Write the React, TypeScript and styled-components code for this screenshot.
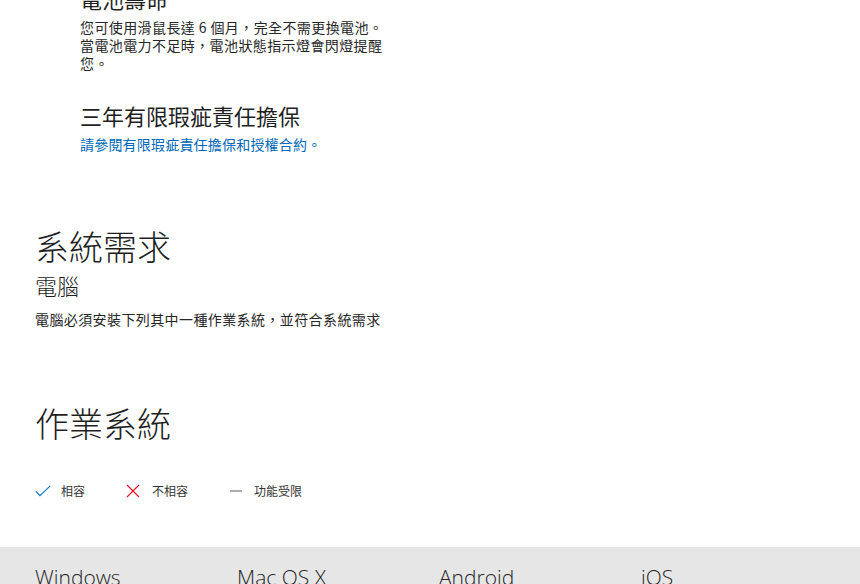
import styled, { createGlobalStyle } from 'styled-components'

const GlobalStyle = createGlobalStyle`
  html, body {
    margin: 0;
    padding: 0;
    background: #fff;
    overflow: hidden;
  }
  body {
    font-family: "Noto Sans CJK TC", "Noto Sans", sans-serif;
    color: #262626;
  }
`

const Page = styled.div`
  width: 860px;
  height: 584px;
  overflow: hidden;
`

const Scroller = styled.div`
  margin-top: -16px;
`

const Content = styled.div`
  padding: 0 35px;
`

const FeatureList = styled.div`
  padding-left: 45px;
  width: 310px;
`

const Feature = styled.div`
  margin-bottom: 29px;
  &:last-child {
    margin-bottom: 0;
  }
`

const FeatureTitle = styled.h3`
  margin: 0 0 6px;
  font-size: 22px;
  line-height: 28px;
  font-weight: 400;
  color: #1f1f1f;
`

const Text = styled.p`
  margin: 0;
  font-size: 14px;
  line-height: 18px;
  letter-spacing: 0.4px;
  color: #262626;
`

const Link = styled.a`
  display: block;
  font-size: 14px;
  line-height: 18px;
  letter-spacing: 0.2px;
  color: #0067b8;
  text-decoration: none;
`

const SectionTitle = styled.h2<{ $top: number }>`
  margin: ${({ $top }) => $top}px 0 0;
  font-size: 34px;
  line-height: 40px;
  font-weight: 300;
  color: #1f1f1f;
`

const SubTitle = styled.h4`
  margin: 5px 0 11px;
  font-size: 22px;
  line-height: 28px;
  font-weight: 300;
  color: #1f1f1f;
`

const Legend = styled.div`
  display: flex;
  align-items: center;
  margin-top: 39px;
  height: 18px;
`

const LegendItem = styled.div<{ $width: number }>`
  display: flex;
  align-items: center;
  width: ${({ $width }) => $width}px;
  font-size: 12px;
  line-height: 18px;
  color: #333;
`

const IconBox = styled.span<{ $width?: number }>`
  display: inline-flex;
  align-items: center;
  justify-content: flex-start;
  width: ${({ $width }) => $width ?? 26}px;
  height: 18px;
`

const Band = styled.div`
  margin-top: 47px;
  background: #e6e6e6;
  height: 60px;
  padding: 16px 35px 0;
  display: grid;
  grid-template-columns: repeat(4, 202px);
`

const OsName = styled.div`
  font-family: "Open Sans", "Noto Sans", sans-serif;
  font-weight: 300;
  font-size: 21px;
  line-height: 28px;
  color: #262626;
`

const CheckIcon = () => (
  <svg width="16" height="12" viewBox="0 0 16 12">
    <path d="M0.8 6.2 L5 10.6 L15.2 0.8" fill="none" stroke="#0078d4" strokeWidth="1.1" />
  </svg>
)

const CrossIcon = () => (
  <svg width="14" height="14" viewBox="0 0 14 14">
    <path d="M1 1 L13 13 M13 1 L1 13" fill="none" stroke="#e81123" strokeWidth="1.1" />
  </svg>
)

const DashIcon = () => (
  <svg width="12" height="4" viewBox="0 0 12 4">
    <path d="M0 2 H12" fill="none" stroke="#999" strokeWidth="1.6" />
  </svg>
)

export default function App() {
  return (
    <Page>
      <GlobalStyle />
      <Scroller>
        <Content>
          <FeatureList>
            <Feature>
              <FeatureTitle>電池壽命</FeatureTitle>
              <Text>
                您可使用滑鼠長達 6 個月，完全不需更換電池。當電池電力不足時，電池狀態指示燈會閃燈提醒您。
              </Text>
            </Feature>
            <Feature>
              <FeatureTitle>三年有限瑕疵責任擔保</FeatureTitle>
              <Link href="#">請參閱有限瑕疵責任擔保和授權合約。</Link>
            </Feature>
          </FeatureList>

          <SectionTitle $top={73}>系統需求</SectionTitle>
          <SubTitle>電腦</SubTitle>
          <Text>電腦必須安裝下列其中一種作業系統，並符合系統需求</Text>

          <SectionTitle $top={75}>作業系統</SectionTitle>
          <Legend>
            <LegendItem $width={91}>
              <IconBox><CheckIcon /></IconBox>
              相容
            </LegendItem>
            <LegendItem $width={104}>
              <IconBox><CrossIcon /></IconBox>
              不相容
            </LegendItem>
            <LegendItem $width={120}>
              <IconBox $width={24}><DashIcon /></IconBox>
              功能受限
            </LegendItem>
          </Legend>
        </Content>
        <Band>
          <OsName>Windows</OsName>
          <OsName>Mac OS X</OsName>
          <OsName>Android</OsName>
          <OsName>iOS</OsName>
        </Band>
      </Scroller>
    </Page>
  )
}
